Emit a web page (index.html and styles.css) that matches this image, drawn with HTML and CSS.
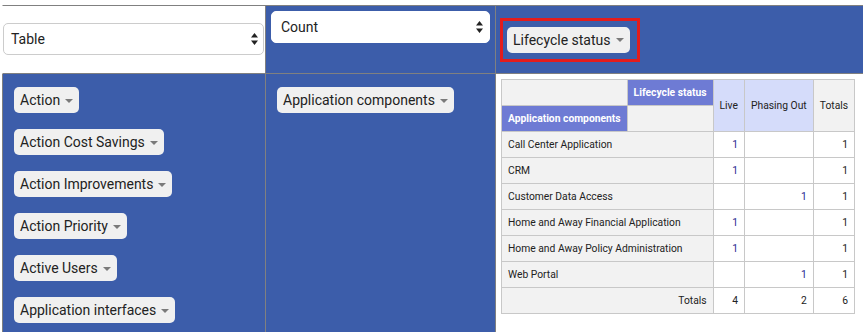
FILE: index.html
```html
<!DOCTYPE html>
<html lang="en">
<head>
  <meta charset="UTF-8">
  <meta name="viewport" content="width=device-width, initial-scale=1.0">
  <title>Pivot Table</title>
  <link rel="stylesheet" href="styles.css">
</head>
<body>
  <table class="pvt-ui">
    <tr>
      <td class="renderer-cell">
        <div class="ui-select renderer">
          <span>Table</span>
          <svg class="updown" width="7" height="12" viewBox="0 0 7 12"><path d="M3.5 0 L7 4.5 L0 4.5 Z M0 7.5 L7 7.5 L3.5 12 Z" fill="#222"/></svg>
        </div>
      </td>
      <td class="agg-cell">
        <div class="ui-select agg">
          <span>Count</span>
          <svg class="updown" width="7" height="12" viewBox="0 0 7 12"><path d="M3.5 0 L7 4.5 L0 4.5 Z M0 7.5 L7 7.5 L3.5 12 Z" fill="#222"/></svg>
        </div>
      </td>
      <td class="axis cols-axis">
        <ul class="attr-list">
          <li class="marked"><span class="attr">Lifecycle status<i class="caret"></i></span></li>
        </ul>
      </td>
    </tr>
    <tr>
      <td class="axis unused">
        <ul class="attr-list vertical">
          <li><span class="attr">Action<i class="caret"></i></span></li>
          <li><span class="attr">Action Cost Savings<i class="caret"></i></span></li>
          <li><span class="attr">Action Improvements<i class="caret"></i></span></li>
          <li><span class="attr">Action Priority<i class="caret"></i></span></li>
          <li><span class="attr">Active Users<i class="caret"></i></span></li>
          <li><span class="attr">Application interfaces<i class="caret"></i></span></li>
        </ul>
      </td>
      <td class="axis rows-axis">
        <ul class="attr-list vertical">
          <li><span class="attr">Application components<i class="caret"></i></span></li>
        </ul>
      </td>
      <td class="output">
        <table class="pvt-table">
          <thead>
            <tr>
              <th class="blank"></th>
              <th class="axis-label">Lifecycle status</th>
              <th class="col-label" rowspan="2">Live</th>
              <th class="col-label" rowspan="2">Phasing Out</th>
              <th class="total-label" rowspan="2">Totals</th>
            </tr>
            <tr>
              <th class="axis-label">Application components</th>
              <th class="blank"></th>
            </tr>
          </thead>
          <tbody>
            <tr>
              <th class="row-label" colspan="2">Call Center Application</th>
              <td class="val">1</td><td class="val"></td><td class="total">1</td>
            </tr>
            <tr>
              <th class="row-label" colspan="2">CRM</th>
              <td class="val">1</td><td class="val"></td><td class="total">1</td>
            </tr>
            <tr>
              <th class="row-label" colspan="2">Customer Data Access</th>
              <td class="val"></td><td class="val">1</td><td class="total">1</td>
            </tr>
            <tr>
              <th class="row-label" colspan="2">Home and Away Financial Application</th>
              <td class="val">1</td><td class="val"></td><td class="total">1</td>
            </tr>
            <tr>
              <th class="row-label" colspan="2">Home and Away Policy Administration</th>
              <td class="val">1</td><td class="val"></td><td class="total">1</td>
            </tr>
            <tr>
              <th class="row-label" colspan="2">Web Portal</th>
              <td class="val"></td><td class="val">1</td><td class="total">1</td>
            </tr>
            <tr>
              <th class="row-label totals" colspan="2">Totals</th>
              <td class="total">4</td><td class="total">2</td><td class="total">6</td>
            </tr>
          </tbody>
        </table>
      </td>
    </tr>
  </table>
</body>
</html>
```

FILE: styles.css
```css
html, body {
  margin: 0;
  padding: 0;
  background: #fff;
  overflow: hidden;
}
body {
  font-family: 'Roboto', 'Liberation Sans', sans-serif;
  color: #222;
  padding: 5px 0 0 2px;
}
.pvt-ui {
  border-collapse: separate;
  border-spacing: 0;
  table-layout: fixed;
  width: 900px;
}
.pvt-ui > tbody > tr > td {
  background: #3c5daa;
  border-right: 1px solid #808080;
  border-bottom: 1px solid #808080;
  padding: 5px;
  vertical-align: top;
}
.pvt-ui > tbody > tr:first-child > td {
  border-top: 1px solid #808080;
  height: 57px;
}
.pvt-ui td.renderer-cell {
  width: 261px;
  background: #fff;
  border-top-color: transparent;
  border-left: 1px solid transparent;
  padding: 0 1px 0 0;
  vertical-align: middle;
}
.pvt-ui td.agg-cell {
  width: 219px;
}
.pvt-ui td.cols-axis {
  vertical-align: middle;
}
.pvt-ui td.unused {
  border-left: 1px solid #808080;
}
.pvt-ui td.output {
  background: #fff;
}

.ui-select {
  display: flex;
  align-items: center;
  justify-content: space-between;
  height: 30px;
  border-radius: 5px;
  background: #fff;
  font-size: 14px;
  color: #222;
}
.renderer {
  border: 1px solid #ccc;
  padding: 0 5px 0 7px;
  margin-top: -2px;
}
.agg {
  border: 1px solid #fff;
  padding: 0 6px 0 9px;
}

.attr-list {
  margin: 0;
  padding: 0;
  list-style: none;
}
.attr-list li {
  display: inline-block;
  padding: 8px 6px;
}
.attr-list.vertical li {
  display: block;
}
.attr-list li.marked {
  outline: 3px solid #e31c1c;
  outline-offset: -2px;
  padding: 8px 9px 8px 6px;
}
.attr {
  display: inline-flex;
  align-items: center;
  height: 26px;
  padding: 0 6px;
  border-radius: 5px;
  background: #f0f0f0;
  font-size: 14px;
  color: #222;
  white-space: nowrap;
}
.caret {
  display: inline-block;
  width: 0;
  height: 0;
  margin-left: 5px;
  margin-top: 1px;
  border-left: 4px solid transparent;
  border-right: 4px solid transparent;
  border-top: 4px solid #7a7a7a;
}

.pvt-table {
  border-collapse: collapse;
  font-size: 10.3px;
  line-height: 13px;
  color: #222;
}
.pvt-table th,
.pvt-table td {
  border: 1px solid #c8c8c8;
  padding: 6px;
  font-weight: normal;
  white-space: nowrap;
}
.pvt-table th {
  background: #f2f2f2;
  text-align: left;
}
.pvt-table th.axis-label {
  background: #6e7bd4;
  color: #fff;
  font-weight: bold;
}
.pvt-table th.col-label {
  background: #d5dcfa;
  vertical-align: middle;
}
.pvt-table th.total-label {
  vertical-align: middle;
}
.pvt-table th.totals {
  text-align: right;
}
.pvt-table td {
  background: #fff;
  text-align: right;
}
.pvt-table td.val {
  color: #2a2a90;
}
```
